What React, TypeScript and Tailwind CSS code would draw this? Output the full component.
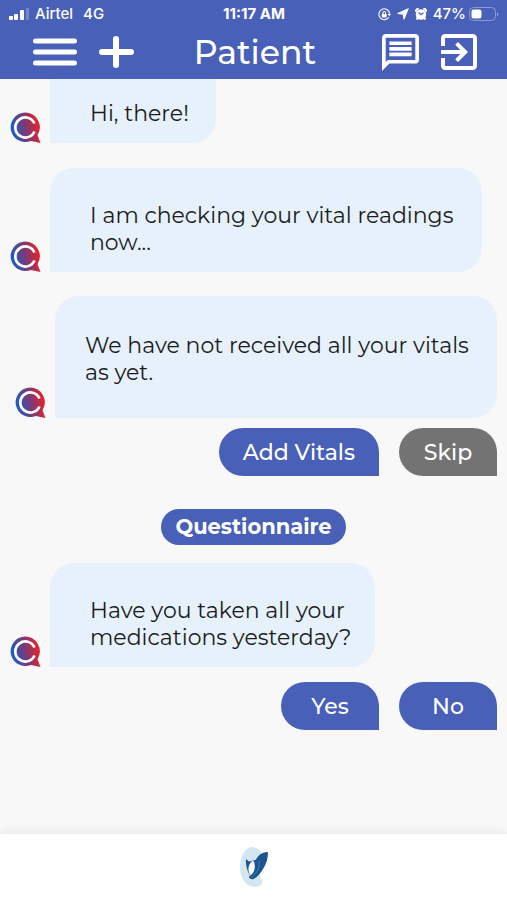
import type { ReactNode } from 'react';

function SignalIcon() {
  return (
    <svg className="h-3 w-5" viewBox="0 0 20 12" fill="#fff" aria-hidden="true">
      <rect x="0" y="8" width="4" height="4" rx="1" />
      <rect x="5" y="6" width="4" height="6" rx="1" />
      <rect x="11" y="2" width="4" height="10" rx="1" />
      <rect x="17" y="0" width="3" height="12" rx="1" opacity="0.25" />
    </svg>
  );
}

function RotationLockIcon() {
  return (
    <svg className="h-[13px] w-[13px]" viewBox="0 0 24 24" fill="none" stroke="#fff" strokeWidth="2" aria-hidden="true">
      <path d="M20 17A10 10 0 1 1 21.500 10" />
      <path d="M17.500 10.500h6.500L21 15z" fill="#fff" stroke="none" />
      <rect x="7" y="11" width="9" height="6.500" rx="1" fill="#fff" stroke="none" />
      <path d="M9 11V9a2.500 2.500 0 0 1 5 0v2" />
    </svg>
  );
}

function LocationIcon() {
  return (
    <svg className="h-3 w-3" viewBox="0 0 12 12" fill="#fff" stroke="#fff" strokeLinejoin="round" aria-hidden="true">
      <path d="M11.300.7 7 11.200 6.200 6.200.7 5.500z" />
    </svg>
  );
}

function AlarmIcon() {
  return (
    <svg className="h-3 w-3" viewBox="0 0 24 24" aria-hidden="true">
      <circle cx="12" cy="13" r="10.500" fill="#fff" />
      <path d="M1.500 7.500A6 6 0 0 1 7.500 1.500M22.500 7.500A6 6 0 0 0 16.500 1.500M5.500 20 3 23M18.500 20l2.500 3" stroke="#fff" strokeWidth="4" fill="none" />
      <path d="M7.500 9 12 13.500 17 9.500" stroke="#4860b8" strokeWidth="2.500" fill="none" />
    </svg>
  );
}

function BatteryIcon() {
  return (
    <svg className="h-[14px] w-[30px]" viewBox="0 0 30 14" aria-hidden="true">
      <rect x="0.500" y="0.500" width="26" height="13" rx="4" fill="none" stroke="#8b9bd6" />
      <rect x="2.500" y="2.500" width="10" height="9" rx="2" fill="#fff" />
      <path d="M28 5a2.500 2.500 0 0 1 0 4.500z" fill="#8b9bd6" />
    </svg>
  );
}

function MenuIcon() {
  return (
    <svg className="h-7 w-11" viewBox="0 0 44 28" stroke="#fff" strokeWidth="5" strokeLinecap="round" aria-hidden="true">
      <path d="M2.500 3h39M2.500 14h39M2.500 25h39" />
    </svg>
  );
}

function PlusIcon() {
  return (
    <svg className="h-8 w-9" viewBox="0 0 36 32" stroke="#fff" strokeWidth="6" strokeLinecap="round" aria-hidden="true">
      <path d="M17 3v26M3 16h29" />
    </svg>
  );
}

function MessagesIcon() {
  return (
    <svg className="h-[37px] w-[37px]" viewBox="2 2 20 20" fill="#fff" aria-hidden="true">
      <path d="M4 4h16v12H5.170L4 17.170V4m0-2c-1.100 0-1.990.9-1.990 2L2 22l4-4h14c1.100 0 2-.9 2-2V4c0-1.100-.9-2-2-2H4zm2 10h12v2H6v-2zm0-3h12v2H6V9zm0-3h12v2H6V6z" />
    </svg>
  );
}

function ExitIcon() {
  return (
    <svg className="h-9 w-9" viewBox="3 3 18 18" fill="#fff" aria-hidden="true">
      <path d="M10.090 15.590 11.500 17l5-5-5-5-1.410 1.410L12.670 11H3v2h9.670l-2.580 2.590zM19 3H5c-1.110 0-2 .9-2 2v4h2V5h14v14H5v-4H3v4c0 1.100.890 2 2 2h14c1.100 0 2-.9 2-2V5c0-1.100-.9-2-2-2z" />
    </svg>
  );
}

function Avatar({ id }: { id: string }) {
  return (
    <svg className="h-[31px] w-[31px] shrink-0" viewBox="0 0 31 31" role="img" aria-label="Assistant">
      <defs>
        <linearGradient id={id} x1="0" y1="0.6" x2="1" y2="0.4">
          <stop offset="0.05" stopColor="#1c5cc4" />
          <stop offset="0.5" stopColor="#7a3a78" />
          <stop offset="0.9" stopColor="#dc2430" />
        </linearGradient>
      </defs>
      <path d="M15 .5a14.800 14.800 0 0 1 12.500 22.700L30.500 31 21 29A14.800 14.800 0 1 1 15 .5z" fill={`url(#${id})`} />
      <path d="M24.500 11.500A10 10 0 1 0 24.500 19.500" fill="none" stroke="#fff" strokeWidth="2.700" />
    </svg>
  );
}

interface MessageProps {
  id: string;
  row?: string;
  bubble: string;
  children: ReactNode;
}

function Message({ id, row = 'pl-[10px]', bubble, children }: MessageProps) {
  return (
    <div className={`flex items-end gap-[9px] pr-[10px] ${row}`}>
      <Avatar id={id} />
      <p className={`bg-[#e7f1fc] text-[22px] leading-[27px] text-[#1a1c20] ${bubble}`}>{children}</p>
    </div>
  );
}

function Reply({ children, className = 'bg-[#4860b8]' }: { children: ReactNode; className?: string }) {
  return (
    <button
      type="button"
      className={`h-12 min-w-[98px] rounded-[24px] rounded-br-none px-6 text-[22px] font-medium text-white ${className}`}
    >
      {children}
    </button>
  );
}

export default function App() {
  return (
    <div className="flex min-h-screen flex-col bg-[#f8f8f8] font-['Montserrat','Inter',sans-serif]">
      <header className="h-[79px] bg-[#4860b8] text-white">
        <div className="grid h-7 grid-cols-[1fr_auto_1fr] items-center pl-[9px] pr-2 font-['Inter',sans-serif] text-[15px] leading-5 font-medium">
          <div className="flex items-center gap-[6px]">
            <SignalIcon />
            <span>Airtel</span>
            <span className="pl-1">4G</span>
          </div>
          <span className="font-bold">11:17 AM</span>
          <div className="flex items-center justify-end gap-[6px]">
            <RotationLockIcon />
            <LocationIcon />
            <AlarmIcon />
            <span className="flex items-center gap-[3px]">
              47%
              <BatteryIcon />
            </span>
          </div>
        </div>
        <div className="grid h-12 grid-cols-[1fr_auto_1fr] items-center pl-[33px] pr-[30px]">
          <div className="flex items-center gap-[22px]">
            <button type="button" aria-label="Menu"><MenuIcon /></button>
            <button type="button" aria-label="Add"><PlusIcon /></button>
          </div>
          <h1 className="text-[33px] leading-10 font-medium">Patient</h1>
          <div className="flex items-center justify-end gap-[22px]">
            <button type="button" aria-label="Messages"><MessagesIcon /></button>
            <button type="button" aria-label="Exit"><ExitIcon /></button>
          </div>
        </div>
      </header>

      <main className="flex-1">
        <Message id="m1" bubble="w-[166px] rounded-br-[24px] pt-[21px] pb-4 pl-10">
          Hi, there!
        </Message>
        <div className="pt-[25px]">
          <Message id="m2" bubble="w-[432px] rounded-[24px] rounded-bl-none pt-[34px] pb-4 pl-10">
            I am checking your vital readings
            <br />
            now...
          </Message>
        </div>
        <div className="pt-6">
          <Message id="m3" row="pl-[15px]" bubble="flex-1 rounded-[24px] rounded-bl-none pt-9 pb-8 pl-[30px]">
            We have not received all your vitals
            <br />
            as yet.
          </Message>
        </div>
        <div className="flex justify-end gap-5 pt-[10px] pr-[10px]">
          <Reply>Add Vitals</Reply>
          <Reply className="bg-[#737373]">Skip</Reply>
        </div>
        <div className="flex justify-center pt-[33px]">
          <h2 className="rounded-full bg-[#4860b8] px-[14px] text-[21px] leading-9 font-bold text-white">
            Questionnaire
          </h2>
        </div>
        <div className="pt-[18px]">
          <Message id="m4" bubble="w-[325px] rounded-[24px] rounded-bl-none pt-[34px] pb-4 pl-10">
            Have you taken all your
            <br />
            medications yesterday?
          </Message>
        </div>
        <div className="flex justify-end gap-5 pt-[15px] pr-[10px]">
          <Reply>Yes</Reply>
          <Reply>No</Reply>
        </div>
      </main>

      <footer className="flex h-[67px] justify-center border-t border-[#eeeeee] bg-white pt-3 shadow-[0_-3px_8px_rgba(0,0,0,0.05)]">
        <svg className="h-[42px] w-7" viewBox="0 0 28 42" role="img" aria-label="Logo">
          <path d="M12 1C19 1 24 8 24 16 24 22 20 24 20 29 21 34 24 36 21 39 18 41 15 41 12 40.500 5 39.500 0 31 0 21S5 1 12 1z" fill="#d3e7f1" />
          <path d="M6 13 9 15.500 15.500 14 18 10.500C21 7 24.500 6 28 6 28 12 26.500 18 23 23 20 28 17 31.500 13.500 33 11.500 33.500 9.500 33 9 31L10 29C7.500 26 5.500 19 6 13z" fill="#1c568f" />
          <path d="M13 14.500C16 18 15.500 26 10.500 29.500 7 25 8 17.500 13 14.500z" fill="#f5fafc" />
          <path d="M19 15C20 21 17 28 11 31.500" fill="none" stroke="#4f86b5" strokeWidth="0.700" />
        </svg>
      </footer>
    </div>
  );
}
